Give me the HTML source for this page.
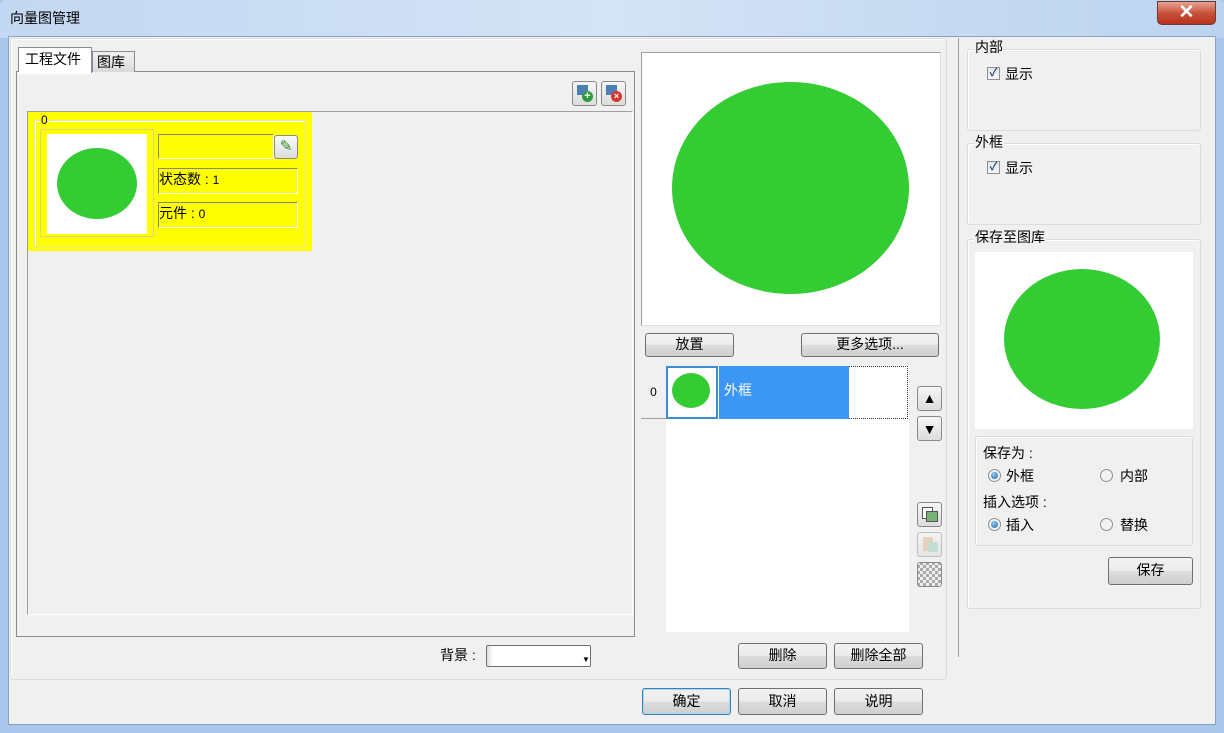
<!DOCTYPE html>
<html><head><meta charset="utf-8"><style>
*{box-sizing:border-box;margin:0;padding:0}
body{width:1224px;height:733px;overflow:hidden;background:#a9c6ea;font-family:"Liberation Sans","Noto Sans CJK SC",sans-serif;font-size:14px;color:#000;position:relative}
.a{position:absolute}
.btn{position:absolute;border:1px solid #707070;border-radius:3px;background:linear-gradient(#f2f2f2,#ebebeb 50%,#dddddd 50%,#cfcfcf);text-align:center;font-size:14px}
.grp{position:absolute;border:1px solid #dcdcdc;border-radius:3px;box-shadow:inset 1px 1px 0 #fff}
.lbl{position:absolute;background:#f0f0f0;padding:0 1px;font-size:14px;line-height:16px}
.cb{position:absolute;width:13px;height:13px;border:1px solid #8e8f8f;background:linear-gradient(#e4e6ea,#f6f7f8);font-size:11px;line-height:11px;color:#2a4a8a;text-align:center;font-weight:bold}
.rd{position:absolute;width:13px;height:13px;border:1px solid #8e8f8f;border-radius:50%;background:#f2f2f2}
.rd.on::after{content:"";position:absolute;left:2px;top:2px;width:7px;height:7px;border-radius:50%;background:radial-gradient(circle at 40% 35%,#8fd0ff,#1a5d9e)}
.ib{position:absolute;width:25px;height:25px;border:1px solid #8a8a8a;border-radius:3px;background:linear-gradient(#f6f6f6,#dcdcdc)}
</style></head><body>
<div class="a" style="left:0;top:0;width:1224px;height:38px;background:linear-gradient(90deg,#c3d8f2,#d4e3f5 50%,#bcd3ef);border-radius:6px 6px 0 0"></div>
<div class="a" style="left:10px;top:8px;font-size:14px">向量图管理</div>
<div class="a" style="left:1157px;top:1px;width:59px;height:24px;border:1px solid #6d3a33;border-radius:0 0 5px 5px;background:linear-gradient(#e7a594,#c9513c 50%,#b7331c);color:#fff;text-align:center;font-size:19px;line-height:22px;font-weight:bold">✕</div>
<div class="a" style="left:8px;top:36px;width:1208px;height:689px;background:#f0f0f0;border:1px solid #8aa2c2"></div>
<div class="grp" style="left:10px;top:38px;width:937px;height:642px"></div>
<div class="a" style="left:16px;top:71px;width:619px;height:566px;border:1px solid #898c95;background:#f0f0f0"></div>
<div class="a" style="left:18px;top:47px;width:74px;height:26px;border:1px solid #898c95;border-bottom:none;background:#fff;font-size:14px;padding:1px 0 0 6px">工程文件</div>
<div class="a" style="left:92px;top:51px;width:43px;height:21px;border:1px solid #898c95;border-bottom:none;background:linear-gradient(#f2f2f2,#d9d9d9);font-size:14px;padding:0 0 0 4px">图库</div>
<div class="a" style="left:18px;top:72px;width:73px;height:2px;background:#fff"></div>
<div class="ib" style="left:572px;top:81px"><div class="a" style="left:4px;top:3px;width:11px;height:10px;background:#4b7fb5"></div><div class="a" style="left:9px;top:9px;width:11px;height:11px;border-radius:50%;background:#2d9a3b;color:#fff;font-size:11px;line-height:11px;text-align:center;font-weight:bold">+</div></div>
<div class="ib" style="left:601px;top:81px"><div class="a" style="left:4px;top:3px;width:11px;height:10px;background:#4b7fb5"></div><div class="a" style="left:9px;top:9px;width:11px;height:11px;border-radius:50%;background:#d33a2e;color:#fff;font-size:9px;line-height:11px;text-align:center;font-weight:bold">×</div></div>
<div class="a" style="left:27px;top:111px;width:606px;height:504px;border-top:1px solid #a0a0a0;border-left:1px solid #a0a0a0;border-right:1px solid #fff;border-bottom:1px solid #fff"></div>
<div class="a" style="left:28px;top:112px;width:284px;height:139px;background:#ffff00"></div>
<div class="a" style="left:34px;top:120px;width:272px;height:127px;border:1px solid #e8e8a0;box-shadow:inset 1px 1px 0 #fff"></div>
<div class="a" style="left:40px;top:113px;background:#ffff00;font-size:12px;line-height:14px;padding:0 1px">0</div>
<div class="a" style="left:40px;top:129px;width:114px;height:108px;border:1px solid #d8d880"></div>
<div class="a" style="left:47px;top:134px;width:100px;height:100px;background:#fff"></div>
<div class="a" style="left:57px;top:148px;width:80px;height:71px;border-radius:50%;background:#33cc33"></div>
<div class="a" style="left:158px;top:134px;width:116px;height:25px;border:1px solid #888;border-right-color:#fff;border-bottom-color:#fff"></div>
<div class="a" style="left:274px;top:135px;width:24px;height:24px;border:1px solid #888;border-radius:3px;background:linear-gradient(#fafafa,#dcdcdc);color:#2c8a2c;font-size:15px;text-align:center;line-height:22px">✎</div>
<div class="a" style="left:158px;top:168px;width:140px;height:26px;border:1px solid #888;border-right-color:#fff;border-bottom-color:#fff;font-size:14px;line-height:20px">状态数 : <span style="font-size:12px">1</span></div>
<div class="a" style="left:158px;top:202px;width:140px;height:26px;border:1px solid #888;border-right-color:#fff;border-bottom-color:#fff;font-size:14px;line-height:20px">元件 : <span style="font-size:12px">0</span></div>
<div class="a" style="left:440px;top:645px">背景 :</div>
<div class="a" style="left:486px;top:645px;width:105px;height:22px;border:1px solid #707070;border-radius:2px;background:linear-gradient(90deg,#ddd,#fff 6px)"><div class="a" style="left:6px;top:1px;width:88px;height:18px;background:#fff"></div><div class="a" style="left:95px;top:9px;font-size:8px">▼</div></div>
<div class="a" style="left:641px;top:52px;width:300px;height:274px;border:1px solid #a0a0a0;border-right-color:#e0e0e0;border-bottom-color:#e0e0e0;background:#fff"></div>
<div class="a" style="left:672px;top:82px;width:237px;height:212px;border-radius:50%;background:#33cc33"></div>
<div class="btn" style="left:645px;top:333px;width:89px;height:24px;line-height:21px">放置</div>
<div class="btn" style="left:801px;top:333px;width:138px;height:24px;line-height:21px">更多选项...</div>
<div class="a" style="left:641px;top:366px;width:25px;height:53px;background:#f0f0f0;border-bottom:1px solid #a0a0a0;font-size:12px;text-align:center;line-height:53px">0</div>
<div class="a" style="left:666px;top:366px;width:243px;height:266px;background:#fff"></div>
<div class="a" style="left:666px;top:366px;width:52px;height:53px;border:2px solid #3b8fd6;background:#fff"></div>
<div class="a" style="left:672px;top:373px;width:38px;height:35px;border-radius:50%;background:#33cc33"></div>
<div class="a" style="left:719px;top:366px;width:130px;height:53px;background:#3c96f3;color:#fff;padding:14px 0 0 5px">外框</div>
<div class="a" style="left:849px;top:366px;width:59px;height:53px;border:1px dotted #333;border-left:none"></div>
<div class="ib" style="left:917px;top:386px;text-align:center;font-size:14px;line-height:22px">▲</div>
<div class="ib" style="left:917px;top:416px;text-align:center;font-size:14px;line-height:24px">▼</div>
<div class="ib" style="left:917px;top:502px"><div class="a" style="left:4px;top:4px;width:11px;height:12px;border:1px solid #555;background:#fff"></div><div class="a" style="left:8px;top:8px;width:12px;height:11px;border:1px solid #555;background:#7ab27a"></div></div>
<div class="ib" style="left:917px;top:532px;opacity:.5"><div class="a" style="left:5px;top:4px;width:10px;height:14px;background:#d8b88a"></div><div class="a" style="left:10px;top:9px;width:10px;height:10px;background:#9cb"></div></div>
<div class="ib" style="left:917px;top:562px;background:repeating-conic-gradient(#aaa 0 25%,#eee 0 50%) 5px 5px/6px 6px"></div>
<div class="btn" style="left:738px;top:643px;width:89px;height:26px;line-height:23px">删除</div>
<div class="btn" style="left:834px;top:643px;width:89px;height:26px;line-height:23px">删除全部</div>
<div class="a" style="left:958px;top:38px;width:1px;height:619px;background:#a0a0a0"></div>
<div class="grp" style="left:967px;top:49px;width:234px;height:82px"></div>
<div class="lbl" style="left:974px;top:39px">内部</div>
<div class="cb" style="left:987px;top:67px">✓</div><div class="a" style="left:1005px;top:64px">显示</div>
<div class="grp" style="left:967px;top:143px;width:234px;height:82px"></div>
<div class="lbl" style="left:974px;top:134px">外框</div>
<div class="cb" style="left:987px;top:161px">✓</div><div class="a" style="left:1005px;top:158px">显示</div>
<div class="grp" style="left:967px;top:239px;width:234px;height:370px"></div>
<div class="lbl" style="left:974px;top:229px">保存至图库</div>
<div class="a" style="left:975px;top:252px;width:218px;height:177px;background:#fff"></div>
<div class="a" style="left:1004px;top:269px;width:156px;height:140px;border-radius:50%;background:#33cc33"></div>
<div class="grp" style="left:975px;top:436px;width:218px;height:110px"></div>
<div class="a" style="left:983px;top:443px">保存为 :</div>
<div class="rd on" style="left:988px;top:469px"></div><div class="a" style="left:1006px;top:466px">外框</div>
<div class="rd" style="left:1100px;top:469px"></div><div class="a" style="left:1120px;top:466px">内部</div>
<div class="a" style="left:983px;top:492px">插入选项 :</div>
<div class="rd on" style="left:988px;top:518px"></div><div class="a" style="left:1006px;top:515px">插入</div>
<div class="rd" style="left:1100px;top:518px"></div><div class="a" style="left:1120px;top:515px">替换</div>
<div class="btn" style="left:1108px;top:557px;width:85px;height:28px;line-height:25px">保存</div>
<div class="btn" style="left:642px;top:688px;width:89px;height:27px;line-height:24px;border-color:#3c7fb1;box-shadow:inset 0 0 0 1px #9fdcf7">确定</div>
<div class="btn" style="left:738px;top:688px;width:89px;height:27px;line-height:24px">取消</div>
<div class="btn" style="left:834px;top:688px;width:89px;height:27px;line-height:24px">说明</div>
</body></html>
